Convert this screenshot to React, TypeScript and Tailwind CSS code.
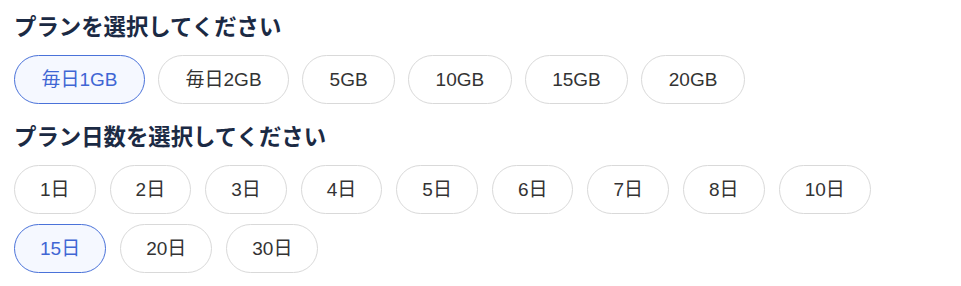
const plans = ["毎日1GB", "毎日2GB", "5GB", "10GB", "15GB", "20GB"];
const days = ["1日", "2日", "3日", "4日", "5日", "6日", "7日", "8日", "10日", "15日", "20日", "30日"];

function Chip({ label, active, wide }: { label: string; active?: boolean; wide?: boolean }) {
    const base = wide
        ? "rounded-full border px-[26.5px] py-[12px] text-[19px] leading-[23px]"
        : "rounded-full border px-[25px] py-[12px] text-[19px] leading-[23px]";
    return (
        <button
            className={
                active
                    ? base + " border-[#4a72d9] bg-[#f5f8ff] text-[#3f66d4]"
                    : base + " border-[#d9d9d9] bg-white text-[#333333]"
            }
        >
            {label}
        </button>
    );
}

export default function App() {
    return (
        <div
            className="bg-white px-[14px] pt-[13px] pb-3"
            style={{ fontFamily: '"Liberation Sans", "Noto Sans CJK JP", sans-serif' }}
        >
            <h2 className="mb-[12px] text-[22.4px] font-bold leading-[30px] text-[#1b2a44]">プランを選択してください</h2>
            <div className="flex flex-wrap gap-x-[13px] gap-y-[10px]">
                {plans.map((p, i) => (
                    <Chip key={p} label={p} active={i === 0} wide />
                ))}
            </div>
            <h2 className="mt-[19px] mb-[12px] text-[22.4px] font-bold leading-[30px] text-[#1b2a44]">プラン日数を選択してください</h2>
            <div className="flex max-w-[880px] flex-wrap gap-x-[14px] gap-y-[10px]">
                {days.map(d => (
                    <Chip key={d} label={d} active={d === "15日"} />
                ))}
            </div>
        </div>
    );
}
